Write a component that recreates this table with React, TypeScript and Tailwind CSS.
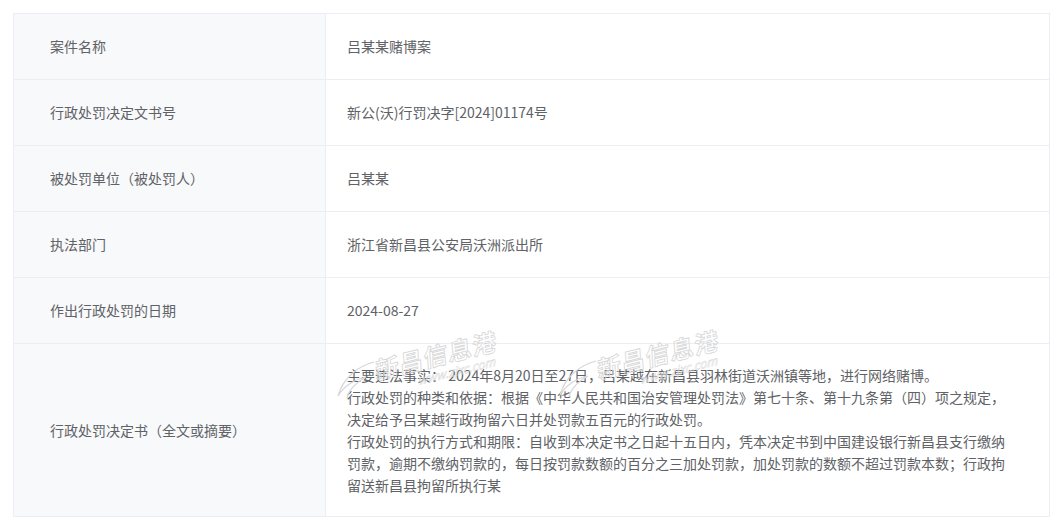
import React from "react";

const rows: { label: string; value: string }[] = [
  { label: "案件名称", value: "吕某某赌博案" },
  { label: "行政处罚决定文书号", value: "新公(沃)行罚决字[2024]01174号" },
  { label: "被处罚单位（被处罚人）", value: "吕某某" },
  { label: "执法部门", value: "浙江省新昌县公安局沃洲派出所" },
  { label: "作出行政处罚的日期", value: "2024-08-27" },
];

const lines = [
  "主要违法事实： 2024年8月20日至27日，吕某越在新昌县羽林街道沃洲镇等地，进行网络赌博。",
  "行政处罚的种类和依据：根据《中华人民共和国治安管理处罚法》第七十条、第十九条第（四）项之规定，",
  "决定给予吕某越行政拘留六日并处罚款五百元的行政处罚。",
  "行政处罚的执行方式和期限：自收到本决定书之日起十五日内，凭本决定书到中国建设银行新昌县支行缴纳",
  "罚款，逾期不缴纳罚款的，每日按罚款数额的百分之三加处罚款，加处罚款的数额不超过罚款本数；行政拘",
  "留送新昌县拘留所执行某",
];

function Watermark({ className }: { className: string }) {
  return (
    <div className={"pointer-events-none absolute select-none " + className}>
      <svg className="absolute left-[-40px] top-[16px]" width="44" height="44" viewBox="0 0 44 44">
        <path
          d="M40 4 C24 8 9 20 4 38 C10 28 21 21 32 19 C24 23 15 31 13 40"
          fill="none"
          stroke="#d6d6d6"
          strokeWidth="1.2"
        />
      </svg>
      <div className="-rotate-[14deg] -skew-x-[10deg]">
        <div className="whitespace-nowrap text-[24px] leading-[26px] font-bold tracking-[1px] text-transparent [-webkit-text-stroke:0.8px_#d6d6d6]">
          新昌信息港
        </div>
        <div className="ml-[42px] whitespace-nowrap text-[12px] leading-[13px] italic text-transparent [-webkit-text-stroke:0.5px_#d9d9d9]">
          www.zjxc.com
        </div>
      </div>
    </div>
  );
}

export default function App() {
  return (
    <div
      className="min-h-[529px] w-[1058px] bg-white pl-[13px] pt-[13px] text-[14px] text-[#606266]"
      style={{ fontFamily: '"Noto Sans CJK SC", "Noto Sans", sans-serif' }}
    >
      <div className="w-[1037px] border-l border-t border-[#ebeef5]">
        {rows.map((r) => (
          <div key={r.label} className="grid grid-cols-[312px_1fr]">
            <div className="flex h-[66px] items-center border-b border-r border-[#ebeef5] bg-[#f8f9fb] pl-[36px]">
              {r.label}
            </div>
            <div className="flex h-[66px] items-center border-b border-r border-[#ebeef5] pl-[21px]">
              {r.value}
            </div>
          </div>
        ))}
        <div className="grid grid-cols-[312px_1fr]">
          <div className="flex h-[173px] items-center border-b border-r border-[#ebeef5] bg-[#f8f9fb] pl-[36px]">
            行政处罚决定书（全文或摘要）
          </div>
          <div className="relative flex h-[173px] flex-col justify-center border-b border-r border-[#ebeef5] pl-[21px] leading-[22px]">
            {lines.map((l, i) => (
              <div key={i} className="whitespace-nowrap">
                {l}
              </div>
            ))}
            <Watermark className="left-[48px] top-[-2px]" />
            <Watermark className="left-[270px] top-[-3px]" />
          </div>
        </div>
      </div>
    </div>
  );
}
